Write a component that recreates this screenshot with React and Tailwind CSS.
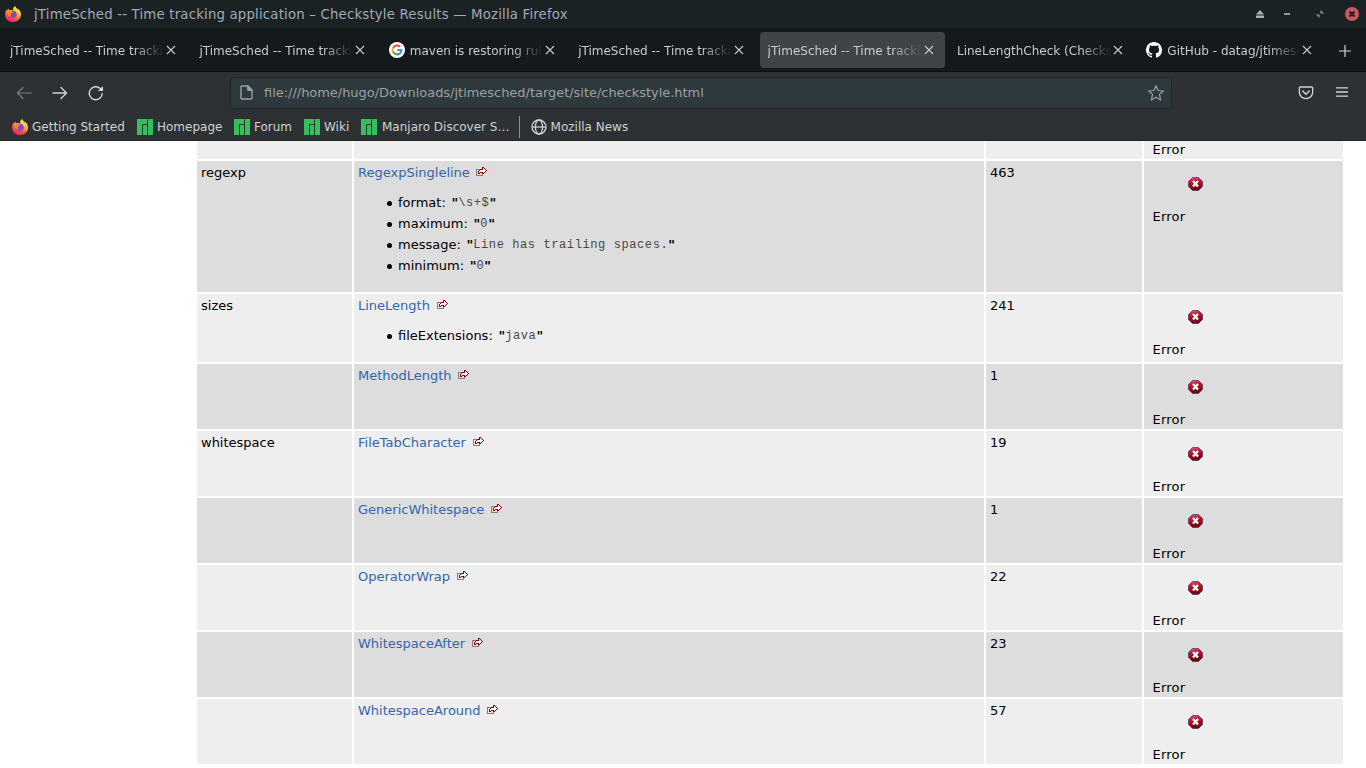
import React from "react";

const TABS = [
  { title: "jTimeSched -- Time tracki" },
  { title: "jTimeSched -- Time tracki" },
  { title: "maven is restoring rul", icon: "google" },
  { title: "jTimeSched -- Time tracki" },
  { title: "jTimeSched -- Time tracki", active: true },
  { title: "LineLengthCheck (Checkst" },
  { title: "GitHub - datag/jtimesc", icon: "github" },
];

const ROWS = [
  {
    category: "regexp",
    rule: "RegexpSingleline",
    count: 463,
    height: "h-[131px]",
    props: [
      ["format", "\\s+$"],
      ["maximum", "0"],
      ["message", "Line has trailing spaces."],
      ["minimum", "0"],
    ],
  },
  {
    category: "sizes",
    rule: "LineLength",
    count: 241,
    height: "h-[68px]",
    props: [["fileExtensions", "java"]],
  },
  { category: "", rule: "MethodLength", count: 1 },
  { category: "whitespace", rule: "FileTabCharacter", count: 19 },
  { category: "", rule: "GenericWhitespace", count: 1 },
  { category: "", rule: "OperatorWrap", count: 22 },
  { category: "", rule: "WhitespaceAfter", count: 23 },
  { category: "", rule: "WhitespaceAround", count: 57 },
];

function FirefoxIcon({ id }) {
  return (
    <svg className="size-4 shrink-0" viewBox="0 0 16 16">
      <defs>
        <linearGradient id={id} x1="0.85" y1="0.05" x2="0.25" y2="1">
          <stop offset="0.1" stopColor="#fff04a" />
          <stop offset="0.4" stopColor="#ffa32c" />
          <stop offset="0.7" stopColor="#ff4a3c" />
          <stop offset="1" stopColor="#e6238a" />
        </linearGradient>
      </defs>
      <path
        d="M10.400 0c.2 1.700 1.400 2.500 2.500 3.700-.1-.6-.2-1-.2-1.200 1.900 1.300 3.300 3.700 3.300 6C16 12.800 12.500 16 8 16S0 12.700 0 8.400c0-2 .9-4 2-5.200l.3 1.300c.3-.9.7-1.600 1.300-2.100.2.9.6 1.500 1.200 1.900 1.200-.4 2.100-.2 3.200.2C7.800 2.500 8.700.9 10.400 0z"
        fill={`url(#${id})`}
      />
      <circle cx="8.300" cy="8.300" r="3.500" fill="#7b4bd8" />
      <path d="M1.200 6.200C2.200 4.700 4 4.500 5.800 5.200l2.600.9c-.5.9-1.700 1-2.300 1.500-.6.5-.4 1.800.2 2.600-2.300.5-4.300-1-5.100-4z" fill="#ff8a22" />
      <path d="M9.500 4.500c1.900.8 2.800 2.400 2.300 4.300 1.200-1.600.9-4.300-1-5.400z" fill="#ffd23c" />
    </svg>
  );
}

function GoogleIcon() {
  return (
    <svg className="size-4 shrink-0" viewBox="0 0 16 16">
      <circle cx="8" cy="8" r="8" fill="#fff" />
      <g fill="none" strokeWidth="2">
        <path d="M4.100 5.900A4.600 4.600 0 0 1 11.300 4.800" stroke="#d9503f" />
        <path d="M4.100 10.200A4.600 4.600 0 0 1 4.100 5.800" stroke="#f0b429" />
        <path d="M4.100 10.100A4.600 4.600 0 0 0 11 11.400" stroke="#4c9c57" />
        <path d="M8.200 8.100h4.300c0 1.400-.5 2.500-1.500 3.400" stroke="#5383ec" />
      </g>
    </svg>
  );
}

function GithubIcon() {
  return (
    <svg className="size-4 shrink-0" viewBox="0 0 16 16" fill="#fff">
      <path d="M8 0C3.580 0 0 3.580 0 8c0 3.540 2.290 6.530 5.470 7.590.4.070.55-.17.55-.38 0-.19-.01-.82-.01-1.490-2.010.37-2.530-.49-2.690-.94-.09-.23-.48-.94-.82-1.130-.28-.15-.68-.52-.01-.53.63-.01 1.080.58 1.230.82.72 1.210 1.870.87 2.330.66.07-.52.28-.87.51-1.070-1.780-.2-3.640-.89-3.640-3.950 0-.87.31-1.590.82-2.150-.08-.2-.36-1.020.08-2.120 0 0 .67-.21 2.200.82.64-.18 1.320-.27 2-.27s1.360.09 2 .27c1.530-1.040 2.200-.82 2.200-.82.44 1.100.16 1.920.08 2.120.51.56.82 1.270.82 2.150 0 3.070-1.870 3.750-3.650 3.950.29.25.54.73.54 1.480 0 1.070-.01 1.930-.01 2.200 0 .21.15.46.55.38A8.010 8.010 0 0 0 16 8c0-4.420-3.580-8-8-8z" />
    </svg>
  );
}

function ManjaroIcon() {
  return (
    <svg className="size-4 shrink-0" viewBox="0 0 16 16" fill="#35bf5c" shapeRendering="crispEdges">
      <path d="M0 0h10v5H5v11H0zM6 6h4v10H6zM11 0h5v16h-5z" />
    </svg>
  );
}

function ExternalIcon() {
  return (
    <svg className="ml-[6.600px] mt-[5px] h-[10px] w-[12px] shrink-0" viewBox="0 0 12 10" shapeRendering="crispEdges">
      <path d="M0 2h4v1H1v5h5v-1h1v2H0z" fill="#808080" />
      <path d="M7 1h1v1h1v1h1v1h-1v1h-1v1h-1v-1h-3v2h-1V5h1V4h1V3h2z" fill="#fff" />
      <path
        d="M6 0h2v1H7v1H6zM8 1h1v1H8zM9 2h1v1H9zM10 3h1v1h-1zM9 4h1v1H9zM8 5h1v1H8zM7 6h1v1H7zM6 5h1v2H6zM4 2h3v1H4zM3 3h1v1H3zM2 4h1v3H2zM3 6h1v1H3zM4 5h2v1H4z"
        fill="#900000"
      />
    </svg>
  );
}

function ErrorIcon({ id }) {
  return (
    <svg className="h-[14px] w-[15px]" viewBox="0 0 15 14">
      <defs>
        <linearGradient id={id} x1="0" y1="0" x2="0.2" y2="1">
          <stop offset="0" stopColor="#d06aa0" />
          <stop offset="0.3" stopColor="#c81f3c" />
          <stop offset="0.6" stopColor="#b00a14" />
          <stop offset="1" stopColor="#600a18" />
        </linearGradient>
      </defs>
      <path d="M4.500.5h6l4 4v5l-4 4h-6l-4-4v-5z" fill={`url(#${id})`} stroke="#4a3868" strokeOpacity="0.75" />
      <path d="M5 4l5 5.500M10 4L5 9.500" stroke="#fff" strokeWidth="2.300" />
    </svg>
  );
}

function Tab({ tab }) {
  return (
    <div className="flex h-9 w-[189.400px] shrink-0 px-[2px]">
      <div className={`flex w-full items-center rounded-[4px] pl-2 ${tab.active ? "bg-[#3f4447]" : ""}`}>
        <div className="flex w-[154px] shrink-0 items-center gap-[5px]">
          {tab.icon === "google" && <GoogleIcon />}
          {tab.icon === "github" && <GithubIcon />}
          <span className="min-w-0 flex-1 overflow-hidden whitespace-nowrap pt-[2px] [mask-image:linear-gradient(to_left,transparent_0,black_30px)]">
            {tab.title}
          </span>
        </div>
        <svg className="ml-[2px] size-[10px] shrink-0" viewBox="0 0 10 10" stroke="#c6cccb" strokeWidth="1.100">
          <path d="M1 1l8 8M9 1L1 9" />
        </svg>
      </div>
    </div>
  );
}

function Row({ row, index }) {
  const bg = index % 2 === 0 ? "bg-[#ddd]" : "bg-[#eee]";
  return (
    <div className={`grid shrink-0 grid-cols-[155px_630px_156px_199px] gap-[2px] leading-[21px] ${row.height || "h-[65px]"}`}>
      <div className={`${bg} pl-1 pt-[1px]`}>{row.category}</div>
      <div className={`${bg} pl-1 pt-[1px]`}>
        <div className="flex">
          <span className="text-[#36a]">{row.rule}</span>
          <ExternalIcon />
        </div>
        {row.props && (
          <ul className="pt-[9px]">
            {row.props.map(([name, value]) => (
              <li key={name} className="flex h-[21px] items-center pl-[28.500px]">
                <span className="mr-[6.500px] mt-[1px] size-[5px] rounded-full bg-black" />
                <span className="whitespace-pre">{name}: </span>
                <span className="ml-[1.500px] font-bold">&quot;</span>
                <code className="pt-[2px] font-['Liberation_Mono',monospace] text-[12px] tracking-[0.600px] text-[#484848]">{value}</code>
                <span className="font-bold">&quot;</span>
              </li>
            ))}
          </ul>
        )}
      </div>
      <div className={`${bg} pl-1 pt-[1px]`}>{row.count}</div>
      <div className={`${bg} flex flex-col pl-2`}>
        <div className="h-[46px] pl-9 pt-4">
          <ErrorIcon id={`error-${index}`} />
        </div>
        <div className="pl-[0.500px] leading-[19px] tracking-[0.200px]">Error</div>
      </div>
    </div>
  );
}

function Bookmark({ icon, label, className }) {
  return (
    <div className={`flex shrink-0 items-center gap-1 whitespace-nowrap ${className}`}>
      {icon}
      <span>{label}</span>
    </div>
  );
}

export default function App() {
  return (
    <div className="flex h-[768px] w-[1366px] flex-col overflow-hidden bg-white font-['DejaVu_Sans',sans-serif] text-[13px] text-black">
      <header className="flex h-7 shrink-0 items-center bg-[#1b2224] pl-[5px] text-[13.300px] tracking-[0.180px] text-[#a0a9b6]">
        <FirefoxIcon id="firefox-title" />
        <span className="ml-[13px] flex-1 whitespace-nowrap pt-[2px]">
          jTimeSched -- Time tracking application – Checkstyle Results — Mozilla Firefox
        </span>
        <svg className="mr-[20px] h-2 w-2" viewBox="0 0 8 8" fill="#a5b5b3">
          <path d="M4 0l4 4.500H0zM0 5.500h8V8H0z" />
        </svg>
        <span className="mr-[26px] h-[2px] w-[6px] bg-[#8a9799]" />
        <svg className="mr-[21px] h-2 w-2" viewBox="0 0 8 8" fill="#8a9799">
          <path d="M4.500 0v3.500H8zM0 4.500h3.500V8z" />
        </svg>
        <svg className="mr-[7px] size-[14px]" viewBox="0 0 14 14">
          <circle cx="7" cy="7" r="7" fill="#cb5760" />
          <path d="M4.500 4.500l5 5M9.500 4.500l-5 5" stroke="#1b2224" strokeWidth="2" />
        </svg>
      </header>

      <nav className="flex h-11 shrink-0 items-start border-b border-[#0c1011] bg-[#14191b] pt-1 text-[12px] text-[#c6cccb]">
        {TABS.map((tab, i) => (
          <Tab key={i} tab={tab} />
        ))}
        <svg className="ml-[13.200px] mt-[13px] size-3 shrink-0" viewBox="0 0 12 12" stroke="#d0d5d4" strokeWidth="1.200">
          <path d="M6 0v12M0 6h12" />
        </svg>
      </nav>

      <div className="flex h-[41px] shrink-0 items-center bg-[#2d3133] text-[#d0d5d4]">
        <svg className="ml-4 h-4 w-4" viewBox="0 0 16 16" fill="none" stroke="#777d7e" strokeWidth="1.200" strokeLinecap="round" strokeLinejoin="round">
          <path d="M15 8H1.500M7 2.500L1.500 8 7 13.500" />
        </svg>
        <svg className="ml-5 h-4 w-4" viewBox="0 0 16 16" fill="none" stroke="currentColor" strokeWidth="1.300" strokeLinecap="round" strokeLinejoin="round">
          <path d="M1 8h13.500M9 2.500L14.500 8 9 13.500" />
        </svg>
        <svg className="ml-5 h-4 w-4" viewBox="0 0 16 16" fill="none" stroke="currentColor" strokeWidth="1.400">
          <path d="M14.300 8.300A6.500 6.500 0 1 1 12.300 3.500L13.500 5" />
          <path d="M15 1v5h-5z" fill="currentColor" stroke="none" />
        </svg>
        <div className="ml-[126px] flex h-8 w-[942px] items-center rounded-[4px] border border-[#1d2628] bg-[#2e393e] text-[#9ba0a1]">
          <svg className="ml-[9px] h-[15px] w-[13px]" viewBox="0 0 13 15" fill="none" stroke="currentColor" strokeWidth="1.400" strokeLinejoin="round">
            <path d="M1 2.200Q1 1 2.200 1H8l4 4v7.800q0 1.200-1.200 1.200H2.200Q1 14 1 12.800z" />
            <path d="M7.800 1v4.200H12z" fill="currentColor" />
          </svg>
          <span className="ml-[11px] flex-1 pt-px text-[12.950px]">file:///home/hugo/Downloads/jtimesched/target/site/checkstyle.html</span>
          <svg className="mr-[7px] size-4" viewBox="0 0 16 16" fill="none" stroke="currentColor" strokeWidth="1.200" strokeLinejoin="round">
            <path d="M8 .8l2.100 4.700 5.200.5-3.900 3.400 1.200 5.500L8 12.200l-4.600 2.700 1.200-5.500L.7 6l5.200-.5z" />
          </svg>
        </div>
        <svg className="ml-[126px] h-[14px] w-4" viewBox="0 0 16 14" fill="none" stroke="currentColor" strokeWidth="1.300" strokeLinecap="round" strokeLinejoin="round">
          <path d="M2.500 1h11q1.200 0 1.200 1.200V6a6.700 6.700 0 0 1-13.400 0V2.200Q1.300 1 2.500 1z" />
          <path d="M4.700 5L8 8.200 11.300 5" />
        </svg>
        <svg className="mb-[2px] ml-[22px] h-[10px] w-3" viewBox="0 0 12 10" stroke="currentColor" strokeWidth="1.300">
          <path d="M0 .8h12M0 5h12M0 9.200h12" />
        </svg>
      </div>

      <div className="flex h-7 shrink-0 items-center border-b border-[#22262b] bg-[#2d3133] text-[12px] text-[#cdd3d2]">
        <Bookmark className="ml-3 w-[125px]" icon={<FirefoxIcon id="firefox-bookmark" />} label="Getting Started" />
        <Bookmark className="w-[97px]" icon={<ManjaroIcon />} label="Homepage" />
        <Bookmark className="w-[70px]" icon={<ManjaroIcon />} label="Forum" />
        <Bookmark className="w-[57px]" icon={<ManjaroIcon />} label="Wiki" />
        <Bookmark className="w-[158px] gap-[5px]" icon={<ManjaroIcon />} label="Manjaro Discover S…" />
        <span className="h-[22px] w-px bg-[#8e9293]" />
        <Bookmark
          className="ml-[10.600px]"
          icon={
            <svg className="size-4 shrink-0" viewBox="0 0 16 16" fill="none" stroke="currentColor" strokeWidth="1.300">
              <circle cx="8" cy="8" r="7" />
              <ellipse cx="8" cy="8" rx="3.600" ry="7" />
              <path d="M1 8h14" />
            </svg>
          }
          label="Mozilla News"
        />
      </div>

      <main className="flex flex-1 flex-col gap-[2px] overflow-hidden pl-[197px]">
        <div className="grid h-[18px] shrink-0 grid-cols-[155px_630px_156px_199px] gap-[2px] leading-[18px]">
          <div className="bg-[#eee]" />
          <div className="bg-[#eee]" />
          <div className="bg-[#eee]" />
          <div className="bg-[#eee] pl-[8.500px] tracking-[0.200px]">Error</div>
        </div>
        {ROWS.map((row, i) => (
          <Row key={row.rule} row={row} index={i} />
        ))}
      </main>
    </div>
  );
}
